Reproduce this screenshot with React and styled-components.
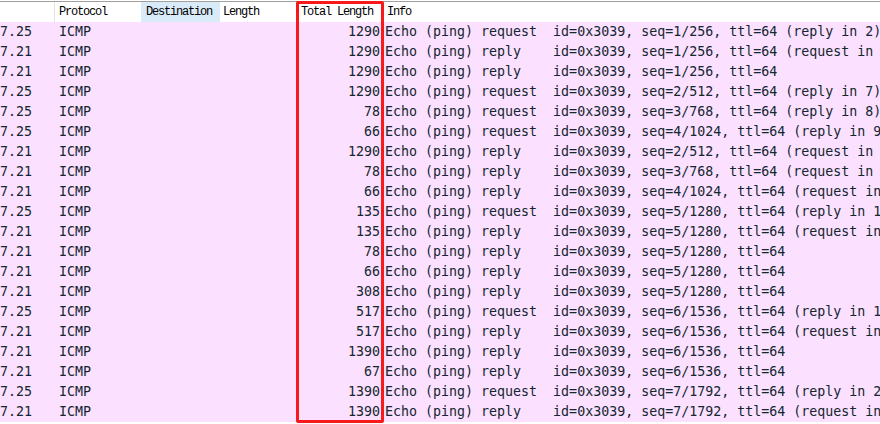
import styled, { createGlobalStyle } from "styled-components"

/* --------------------------------- STYLES --------------------------------- */

const Global = createGlobalStyle`
	html, body {
		margin: 0;
		padding: 0;
		background: #ffffff;
	}
`

const COLS = "54px 87px 79px 77px 87px 1fr"

const Root = styled.div`
	position: relative;
	width: 880px;
	height: 424px;
	overflow: hidden;
	background: #ffffff;
	padding-top: 1px;
	box-sizing: border-box;
`

const Header = styled.div`
	display: grid;
	grid-template-columns: ${COLS};
	height: 20px;
	border-top: 1px solid #a0a0a0;
	background: #ffffff;
`

const HeadCell = styled.div`
	font-family: "Liberation Mono", monospace;
	font-size: 12px;
	letter-spacing: -1.2px;
	line-height: 20px;
	color: #000000;
	padding-left: ${({ $pad }) => $pad ?? 4}px;
	white-space: pre;
	overflow: hidden;
	background: ${({ $sorted }) => ($sorted ? "#d9eaf8" : "transparent")};
	border-left: ${({ $divider }) => ($divider ? "1px solid #e3e3e3" : "none")};
`

const Row = styled.div`
	display: grid;
	grid-template-columns: ${COLS};
	height: 20px;
	background: #fce0ff;
	font-family: "DejaVu Sans Mono", monospace;
	font-size: 13.3px;
	line-height: 20px;
	color: #12272e;
`

const Cell = styled.div`
	white-space: pre;
	overflow: hidden;
	padding-left: ${({ $pad }) => $pad ?? 0}px;
	padding-right: ${({ $padR }) => $padR ?? 0}px;
	text-align: ${({ $right }) => ($right ? "right" : "left")};
`

const Highlight = styled.div`
	position: absolute;
	left: 296px;
	top: 1px;
	width: 88px;
	height: 422px;
	box-sizing: border-box;
	border: 3px solid #f81a1a;
	border-radius: 2px;
	pointer-events: none;
`

/* ---------------------------------- DATA ---------------------------------- */

const packets = [
	["7.25", 1290, "request", "1/256", "(reply in 2)"],
	["7.21", 1290, "reply", "1/256", "(request in 1)"],
	["7.21", 1290, "reply", "1/256", ""],
	["7.25", 1290, "request", "2/512", "(reply in 7)"],
	["7.25", 78, "request", "3/768", "(reply in 8)"],
	["7.25", 66, "request", "4/1024", "(reply in 9)"],
	["7.21", 1290, "reply", "2/512", "(request in 4)"],
	["7.21", 78, "reply", "3/768", "(request in 5)"],
	["7.21", 66, "reply", "4/1024", "(request in 6)"],
	["7.25", 135, "request", "5/1280", "(reply in 11)"],
	["7.21", 135, "reply", "5/1280", "(request in 10)"],
	["7.21", 78, "reply", "5/1280", ""],
	["7.21", 66, "reply", "5/1280", ""],
	["7.21", 308, "reply", "5/1280", ""],
	["7.25", 517, "request", "6/1536", "(reply in 16)"],
	["7.21", 517, "reply", "6/1536", "(request in 15)"],
	["7.21", 1390, "reply", "6/1536", ""],
	["7.21", 67, "reply", "6/1536", ""],
	["7.25", 1390, "request", "7/1792", "(reply in 20)"],
	["7.21", 1390, "reply", "7/1792", "(request in 19)"],
]

function info(kind, seq, note) {
	const k = kind.padEnd(9, " ")
	return `Echo (ping) ${k}id=0x3039, seq=${seq}, ttl=64${note ? " " + note : ""}`
}

/* ------------------------------- COMPONENTS ------------------------------- */

function App() {
	return (
		<Root>
			<Global />
			<Header>
				<HeadCell />
				<HeadCell $divider $pad={4}>Protocol</HeadCell>
				<HeadCell $sorted $pad={5}>Destination</HeadCell>
				<HeadCell $pad={3}>Length</HeadCell>
				<HeadCell $pad={4}>Total Length</HeadCell>
				<HeadCell $pad={3}>Info</HeadCell>
			</Header>
			{packets.map(([src, total, kind, seq, note], i) => (
				<Row key={i}>
					<Cell $pad={0}>{src}</Cell>
					<Cell $pad={5}>ICMP</Cell>
					<Cell />
					<Cell />
					<Cell $right $padR={4}>{total}</Cell>
					<Cell $pad={1}>{info(kind, seq, note)}</Cell>
				</Row>
			))}
			<Highlight />
		</Root>
	)
}

export default App
